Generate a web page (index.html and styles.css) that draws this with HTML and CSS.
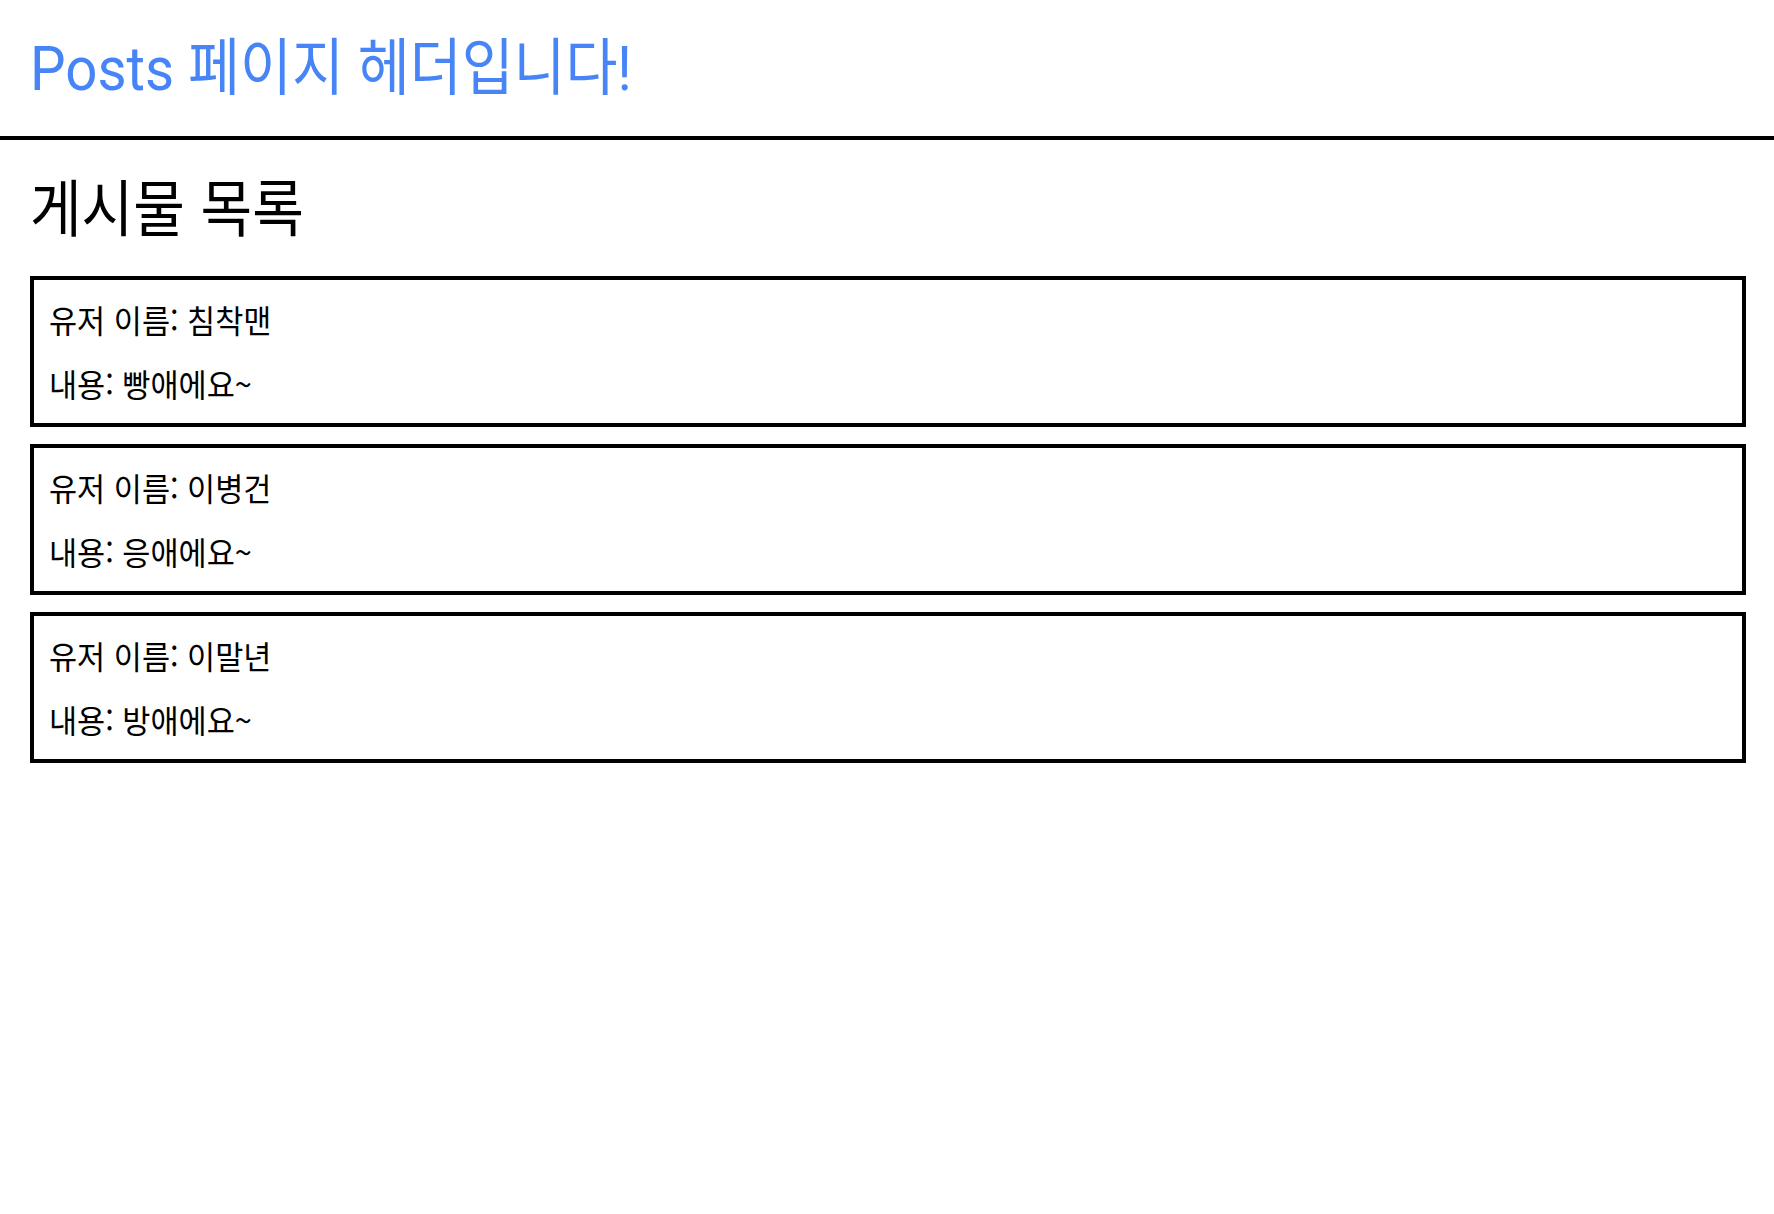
FILE: index.html
```html
<!DOCTYPE html>
<html lang="ko">
<head>
<meta charset="utf-8">
<title>Posts</title>
<link rel="stylesheet" href="styles.css">
</head>
<body>
<header class="site-header">
  <h1 class="site-title">Posts 페이지 헤더입니다!</h1>
</header>
<main class="content">
  <h2 class="section-title">게시물 목록</h2>
  <ul class="post-list">
    <li class="post">
      <p class="post-line">유저 이름: 침착맨</p>
      <p class="post-line">내용: 빵애에요~</p>
    </li>
    <li class="post">
      <p class="post-line">유저 이름: 이병건</p>
      <p class="post-line">내용: 응애에요~</p>
    </li>
    <li class="post">
      <p class="post-line">유저 이름: 이말년</p>
      <p class="post-line">내용: 방애에요~</p>
    </li>
  </ul>
</main>
</body>
</html>
```
FILE: styles.css
```css
html, body {
  margin: 0;
  padding: 0;
  background: #ffffff;
  color: #000000;
  font-family: "Noto Sans CJK KR", "Noto Sans", sans-serif;
}

.site-header {
  padding: 29px 30px 27px;
  border-bottom: 4px solid #000000;
}

.site-title {
  margin: 0;
  font-family: Roboto, "Noto Sans CJK KR", sans-serif;
  font-weight: 400;
  font-size: 62px;
  line-height: 80px;
  color: #4785f6;
  white-space: nowrap;
  transform: scaleX(0.91);
  transform-origin: 0 0;
}

.content {
  padding: 0 28px 0 30px;
}

.section-title {
  margin: 25px 0 0;
  font-weight: 400;
  font-size: 62px;
  line-height: 80px;
  white-space: nowrap;
  transform: scaleX(0.905);
  transform-origin: 0 0;
}

.post-list {
  list-style: none;
  margin: 31px 0 0;
  padding: 0;
  display: flex;
  flex-direction: column;
  gap: 17px;
}

.post {
  border: 4px solid #000000;
  padding: 22px 15px 23px;
  display: flex;
  flex-direction: column;
  gap: 30px;
}

.post-line {
  margin: 0;
  font-size: 32px;
  line-height: 34px;
  white-space: nowrap;
  transform: scaleX(0.955);
  transform-origin: 0 0;
}
```
